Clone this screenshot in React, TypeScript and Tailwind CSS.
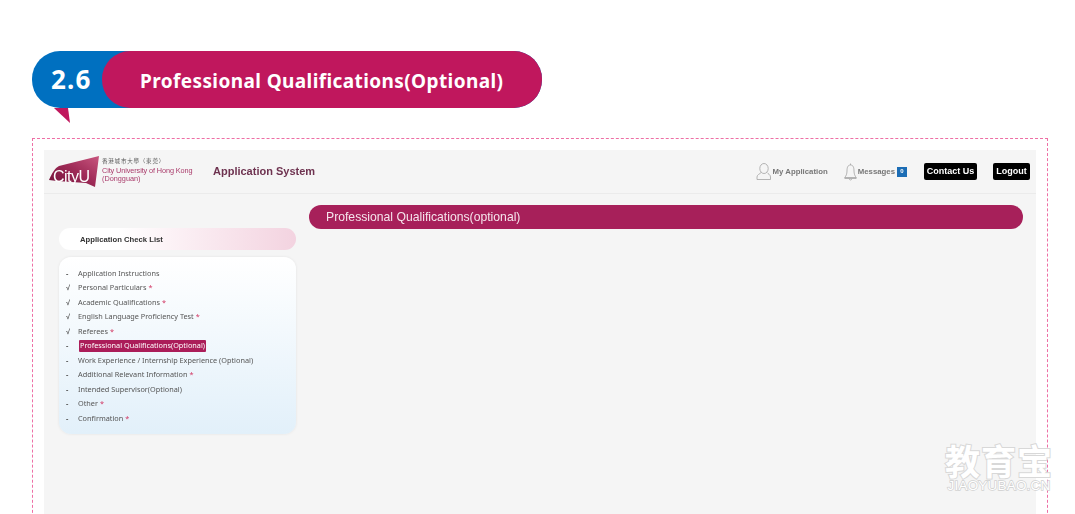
const checkList = [
  { mark: "-", label: "Application Instructions" },
  { mark: "√", label: "Personal Particulars", required: true },
  { mark: "√", label: "Academic Qualifications", required: true },
  { mark: "√", label: "English Language Proficiency Test", required: true },
  { mark: "√", label: "Referees", required: true },
  { mark: "-", label: "Professional Qualifications(Optional)", active: true },
  { mark: "-", label: "Work Experience / Internship Experience (Optional)" },
  { mark: "-", label: "Additional Relevant Information", required: true },
  { mark: "-", label: "Intended Supervisor(Optional)" },
  { mark: "-", label: "Other", required: true },
  { mark: "-", label: "Confirmation", required: true },
];

function Logo() {
  return (
    <svg width="52" height="32" viewBox="0 0 52 32" className="shrink-0">
      <defs>
        <linearGradient id="cityu" x1="0" y1="1" x2="1" y2="0">
          <stop offset="0" stopColor="#6f0f38" />
          <stop offset="0.55" stopColor="#a02c58" />
          <stop offset="1" stopColor="#c9567f" />
        </linearGradient>
      </defs>
      <path d="M0 24 C3 17 6 12 10 10 L50 0 L46 31 L37 27 L8 25 Z" fill="url(#cityu)" />
      <text x="4" y="26" fontSize="16" fill="#fff" fontFamily="Liberation Sans, sans-serif" letterSpacing="-0.5">
        CityU
      </text>
    </svg>
  );
}

function UserIcon() {
  return (
    <svg width="15" height="17" viewBox="0 0 15 17" fill="none" stroke="#a3a3a3" strokeWidth="0.8">
      <ellipse cx="8" cy="5.5" rx="4.2" ry="5" />
      <path d="M1 16.5 V14 C1 11.5 4 11 5 9.5 M14.5 16.5 V14 C14.5 11.5 12 11 11 9.5 M1 16.5 H14.5" />
    </svg>
  );
}

function BellIcon() {
  return (
    <svg width="13" height="18" viewBox="0 0 13 18" fill="none" stroke="#a3a3a3" strokeWidth="0.8">
      <path d="M6.5 0.5 V2 M6.5 2 C3.5 2 3 5 3 8 C3 11 2 13 0.8 14.5 H12.2 C11 13 10 11 10 8 C10 5 9.5 2 6.5 2 Z" />
      <path d="M0.8 14.5 V15.5 H12.2 V14.5 M5 15.5 C5.5 17.5 7.5 17.5 8 15.5" />
    </svg>
  );
}

export default function App() {
  return (
    <div className="relative h-[514px] w-[1075px] overflow-hidden bg-white pt-[51px] font-['Noto_Sans',sans-serif]">
      {/* Section title */}
      <div className="relative ml-8 flex h-[57px] w-[510px] rounded-[28px] bg-[#0070c0]">
        <span className="w-[70px] pl-[19px] text-[26px] font-bold leading-[57px] tracking-[1.2px] text-white">2.6</span>
        <div className="flex h-full w-[440px] items-center rounded-[28px] bg-[#c0175d] pl-[38px] pt-[3px] text-[19px] font-bold tracking-[0.4px] text-white">
          Professional Qualifications(Optional)
        </div>
        <svg className="absolute left-[22px] top-[57px]" width="17" height="15" viewBox="0 0 17 15">
          <path d="M0 0 H14 L16 15 Z" fill="#c0175d" />
        </svg>
      </div>

      {/* Dashed frame with the system screenshot */}
      <div className="ml-8 mt-[30px] h-[400px] w-[1016px] border border-b-0 border-dashed border-[#ee6fa5] px-[11px] pt-[11px]">
        <div className="h-full w-[992px] bg-[#f5f5f5] font-['Liberation_Sans',sans-serif] blur-[0.35px]">
          <header className="flex h-11 items-center border-b border-[#ebebeb] pl-[5px] pr-[6px]">
            <Logo />
            <div className="ml-[1px] w-[111px] pb-[4px] text-[7.3px] text-[#a93a6a]">
              <div className="font-['Noto_Sans_CJK_TC',sans-serif] text-[5.5px] leading-[9px] tracking-[0.8px] text-[#555]">香港城市大學（東莞）</div>
              <div className="whitespace-nowrap leading-[9px] tracking-[-0.1px]">City University of Hong Kong</div>
              <div className="leading-[8px]">(Dongguan)</div>
            </div>
            <span className="text-[11px] font-bold text-[#6e3350]">Application System</span>
            <div className="ml-auto flex items-center">
              <UserIcon />
              <span className="ml-[2px] text-[7.8px] font-bold text-[#777]">My Application</span>
              <div className="ml-[16px]"><BellIcon /></div>
              <span className="ml-[1px] text-[7.8px] font-bold text-[#777]">Messages</span>
              <span className="ml-[2px] flex h-[10px] w-[10px] items-center justify-center bg-[#1c6db5] text-[6px] font-bold text-white">0</span>
              <span className="ml-[17px] flex h-[17px] w-[53px] items-center justify-center rounded-[2px] bg-black text-[9px] font-bold text-white">Contact Us</span>
              <span className="ml-[16px] flex h-[17px] w-[37px] items-center justify-center rounded-[2px] bg-black text-[9px] font-bold text-white">Logout</span>
            </div>
          </header>

          <div className="flex items-start pl-[14px] pr-[13px]">
            <aside className="mt-[34px] w-[239px] shrink-0">
              <div className="ml-px flex h-[22px] w-[237px] items-center rounded-[11px] bg-gradient-to-r from-white from-[25%] to-[#f3d3e0] pl-[21px] pt-px text-[7.7px] font-bold text-[#333]">
                Application Check List
              </div>
              <ul className="ml-px mt-[7px] h-[177px] w-[237px] rounded-[12px] bg-gradient-to-b from-white to-[#e2f0fa] pl-[7px] pt-[9px] font-['Noto_Sans',sans-serif] text-[7.3px] text-[#555] shadow-[0_0_3px_rgba(0,0,0,0.08)]">
                {checkList.map((item) => (
                  <li key={item.label} className="flex h-[14.5px] items-center">
                    <span className="w-3 font-bold text-[#555]">{item.mark}</span>
                    <span className={item.active ? "ml-[0.5px] whitespace-nowrap rounded-[1px] bg-[#ab1d59] px-[1.5px] py-[0.5px] leading-[11px] text-white" : "whitespace-nowrap"}>
                      {item.label}
                    </span>
                    {item.required && <span className="ml-[2px] text-[#d1325f]">*</span>}
                  </li>
                ))}
              </ul>
            </aside>
            <div className="ml-[12px] mt-[11px] flex h-6 flex-1 items-center rounded-xl bg-[#a7205a] pl-[17px] pt-px text-[12.2px] text-[#f5e4ec]">
              Professional Qualifications(optional)
            </div>
          </div>
        </div>
      </div>

      {/* Watermark */}
      <div className="absolute left-[945px] top-[442px] flex w-[108px] flex-col items-center font-['Noto_Sans_CJK_SC',sans-serif] text-white [paint-order:stroke] [-webkit-text-stroke:2px_#d8d8d8]">
        <span className="text-[35px] font-bold leading-[36px] tracking-[1px]">教育宝</span>
        <span className="mt-[1px] font-['Liberation_Sans',sans-serif] text-[13.5px] leading-[14px] tracking-[0.2px] [-webkit-text-stroke:1.4px_#d0d0d0]">JIAOYUBAO.CN</span>
      </div>
    </div>
  );
}
